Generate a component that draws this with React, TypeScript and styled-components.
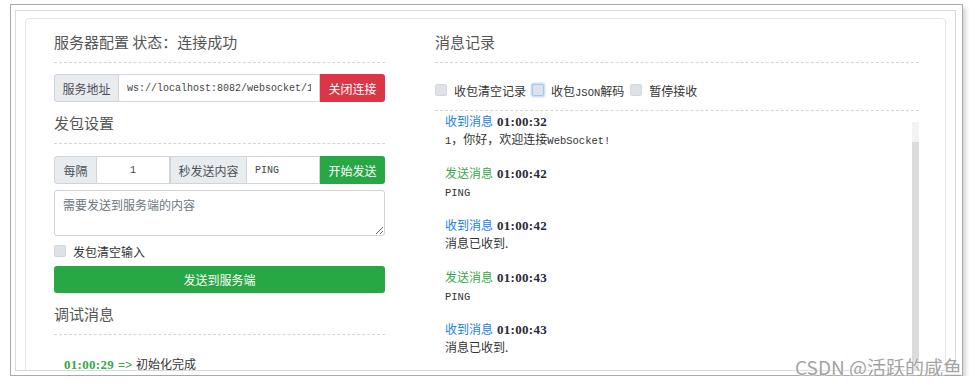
import React from "react";
import styled, { createGlobalStyle, css } from "styled-components";

const GlobalStyle = createGlobalStyle`
  html, body { margin: 0; padding: 0; background: #ffffff; }
  body {
    font-family: "Noto Sans CJK SC", "Noto Sans", sans-serif;
    color: #333;
    overflow: hidden;
  }
  * { box-sizing: border-box; }
`;

const Screen = styled.div`
  position: relative;
  margin: 4px 0 0 10px;
  width: 953px;
  height: 372px;
  border: 1px solid #a9a9a9;
  box-shadow: 3px 4px 4px rgba(0, 0, 0, 0.16);
  padding: 5px 6px 4px 4px;
  background: #fff;
`;

const Frame = styled.div`
  height: 100%;
  border: 1px solid #dadada;
  overflow: hidden;
  padding: 7px 9px 0 9px;
`;

const Card = styled.div`
  display: flex;
  gap: 50px;
  height: 420px;
  border: 1px solid #e4e4e4;
  border-radius: 4px;
  padding: 12px 26px 0 28px;
`;

const LeftCol = styled.div`
  width: 331px;
  display: flex;
  flex-direction: column;
`;

const RightCol = styled.div`
  flex: 1;
  display: flex;
  flex-direction: column;
`;

const SectionTitle = styled.div<{ $mt?: number }>`
  font-size: 15px;
  line-height: 22px;
  height: 22px;
  color: #555;
  margin-top: ${(p) => p.$mt ?? 0}px;
  white-space: nowrap;
`;

const Divider = styled.div<{ $mt?: number }>`
  margin-top: ${(p) => p.$mt ?? 9}px;
  border-top: 1px dashed #d6d6d6;
  height: 0;
`;

const InputGroup = styled.div<{ $mt?: number }>`
  display: flex;
  height: 28px;
  margin-top: ${(p) => p.$mt ?? 0}px;
  border-radius: 3px;
`;

const Addon = styled.span<{ $w: number }>`
  width: ${(p) => p.$w}px;
  flex: none;
  display: flex;
  align-items: center;
  justify-content: center;
  background: #e9ecef;
  border: 1px solid #ced4da;
  color: #495057;
  font-size: 12px;
  &:first-child { border-radius: 3px 0 0 3px; }
  & + & { border-left: none; }
`;

const Field = styled.input<{ $w?: number; $center?: boolean }>`
  ${(p) => (p.$w ? css`width: ${p.$w}px; flex: none;` : css`flex: 1; min-width: 0;`)}
  border: 1px solid #ced4da;
  border-left: none;
  padding: 0 8px;
  font-family: "Liberation Mono", monospace;
  font-size: 10px;
  color: #444;
  text-align: ${(p) => (p.$center ? "center" : "left")};
  outline: none;
  background: #fff;
`;

const GroupButton = styled.button<{ $tone: "red" | "green" }>`
  width: 65px;
  flex: none;
  border: none;
  border-radius: 0 3px 3px 0;
  background: ${(p) => (p.$tone === "red" ? "#dc3545" : "#28a745")};
  color: #fff;
  font-family: "Noto Sans CJK SC", sans-serif;
  font-size: 12px;
  padding: 0;
`;

const TextArea = styled.textarea`
  margin-top: 6px;
  height: 46px;
  border: 1px solid #ced4da;
  border-radius: 3px;
  padding: 5px 8px;
  font-family: "Noto Sans CJK SC", sans-serif;
  font-size: 12px;
  resize: vertical;
  outline: none;
  &::placeholder { color: #6c757d; }
`;

const CheckRow = styled.div<{ $mt?: number }>`
  display: flex;
  align-items: center;
  height: 16px;
  margin-top: ${(p) => p.$mt ?? 0}px;
  gap: 6px;
`;

const CheckItem = styled.label`
  display: flex;
  align-items: center;
  gap: 7px;
  font-size: 12px;
  color: #333;
  white-space: nowrap;
`;

const CheckText = styled.span`
  display: inline-block;
`;

const Box = styled.span<{ $focus?: boolean }>`
  width: 12px;
  height: 12px;
  flex: none;
  border-radius: 2px;
  background: #dee2e6;
  border: 1px solid #d3d7db;
  ${(p) =>
    p.$focus &&
    css`
      border-color: #9cc8f5;
      box-shadow: 0 0 0 1.5px rgba(0, 123, 255, 0.22);
    `}
`;

const WideButton = styled.button`
  margin-top: 7px;
  height: 27px;
  border: none;
  border-radius: 3px;
  background: #28a745;
  color: #fff;
  font-family: "Noto Sans CJK SC", sans-serif;
  font-size: 12px;
`;

const DebugLog = styled.div`
  padding: 20px 0 0 10px;
  font-size: 12px;
  line-height: 18px;
  color: #333;
`;

const Time = styled.span<{ $tone?: "green" | "dark" }>`
  font-family: "Liberation Serif", serif;
  font-weight: bold;
  font-size: 13px;
  letter-spacing: 0.3px;
  color: ${(p) => (p.$tone === "green" ? "#3aa64a" : "#2a2838")};
`;

const Arrow = styled.span`
  color: #3aa64a;
  font-family: "Liberation Sans", sans-serif;
  margin: 0 4px;
`;

const MessageArea = styled.div`
  position: relative;
  height: 300px;
  overflow: hidden;
  padding: 1px 0 0 10px;
`;

const Track = styled.div`
  position: absolute;
  right: 0;
  top: 11px;
  bottom: 0;
  width: 7px;
  background: #f3f3f3;
`;

const Thumb = styled.div`
  position: absolute;
  left: 0;
  right: 0;
  top: 20px;
  bottom: 0;
  background: #dcdcdc;
`;

const Message = styled.div`
  margin-bottom: 16px;
`;

const MsgHead = styled.div`
  display: flex;
  align-items: baseline;
  gap: 4px;
  line-height: 18px;
  height: 18px;
`;

const Kind = styled.span<{ $dir: "in" | "out" }>`
  font-size: 12px;
  color: ${(p) => (p.$dir === "in" ? "#1a7df0" : "#3aa64a")};
`;

const MsgBody = styled.div`
  font-size: 12px;
  line-height: 18px;
  height: 18px;
  color: #333;
`;

const Mono = styled.span`
  font-family: "Liberation Mono", monospace;
  font-size: 10.5px;
`;

const Watermark = styled.div`
  position: absolute;
  right: 0;
  bottom: -4px;
  font-family: "Noto Sans CJK SC", sans-serif;
  font-size: 19px;
  line-height: 24px;
  color: #a3a3a3;
  text-shadow: 0 0 2px #fff, 0 0 2px #fff;
  white-space: nowrap;
`;

type Msg = { dir: "in" | "out"; time: string; body: React.ReactNode };

const messages: Msg[] = [
  {
    dir: "in",
    time: "01:00:32",
    body: (
      <>
        <Mono>1</Mono>，你好，欢迎连接<Mono>WebSocket!</Mono>
      </>
    ),
  },
  { dir: "out", time: "01:00:42", body: <Mono>PING</Mono> },
  { dir: "in", time: "01:00:42", body: "消息已收到." },
  { dir: "out", time: "01:00:43", body: <Mono>PING</Mono> },
  { dir: "in", time: "01:00:43", body: "消息已收到." },
];

export default function App() {
  return (
    <>
      <GlobalStyle />
      <Screen>
        <Frame>
          <Card>
            <LeftCol>
              <SectionTitle>服务器配置&nbsp;状态：连接成功</SectionTitle>
              <Divider />
              <InputGroup $mt={11}>
                <Addon $w={65}>服务地址</Addon>
                <Field defaultValue="ws://localhost:8082/websocket/1" />
                <GroupButton $tone="red">关闭连接</GroupButton>
              </InputGroup>
              <SectionTitle $mt={10}>发包设置</SectionTitle>
              <Divider />
              <InputGroup $mt={12}>
                <Addon $w={43}>每隔</Addon>
                <Field $w={73} $center defaultValue="1" />
                <Addon $w={77}>秒发送内容</Addon>
                <Field defaultValue="PING" />
                <GroupButton $tone="green">开始发送</GroupButton>
              </InputGroup>
              <TextArea placeholder="需要发送到服务端的内容" />
              <CheckRow $mt={7}>
                <CheckItem>
                  <Box />
                  <CheckText>发包清空输入</CheckText>
                </CheckItem>
              </CheckRow>
              <WideButton>发送到服务端</WideButton>
              <SectionTitle $mt={10}>调试消息</SectionTitle>
              <Divider />
              <DebugLog>
                <Time $tone="green">01:00:29</Time>
                <Arrow>=&gt;</Arrow>
                初始化完成
              </DebugLog>
            </LeftCol>
            <RightCol>
              <SectionTitle>消息记录</SectionTitle>
              <Divider />
              <CheckRow $mt={19}>
                <CheckItem>
                  <Box />
                  <CheckText>收包清空记录</CheckText>
                </CheckItem>
                <CheckItem>
                  <Box $focus />
                  <CheckText>
                    收包<Mono>JSON</Mono>解码
                  </CheckText>
                </CheckItem>
                <CheckItem>
                  <Box />
                  <CheckText>暂停接收</CheckText>
                </CheckItem>
              </CheckRow>
              <Divider $mt={12} />
              <MessageArea>
                {messages.map((m, i) => (
                  <Message key={i}>
                    <MsgHead>
                      <Kind $dir={m.dir}>{m.dir === "in" ? "收到消息" : "发送消息"}</Kind>
                      <Time>{m.time}</Time>
                    </MsgHead>
                    <MsgBody>{m.body}</MsgBody>
                  </Message>
                ))}
                <Track>
                  <Thumb />
                </Track>
              </MessageArea>
            </RightCol>
          </Card>
        </Frame>
        <Watermark>CSDN @活跃的咸鱼</Watermark>
      </Screen>
    </>
  );
}
